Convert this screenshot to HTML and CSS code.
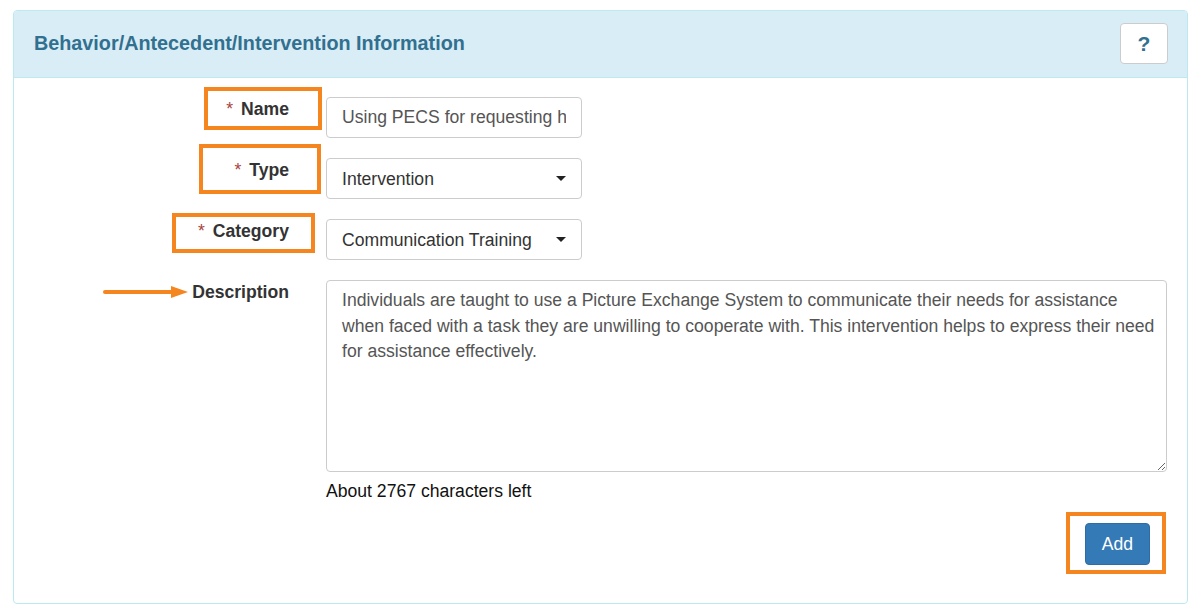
FILE: index.html
```html
<!DOCTYPE html>
<html lang="en">
<head>
  <meta charset="UTF-8">
  <title>Behavior/Antecedent/Intervention Information</title>
  <link rel="stylesheet" href="styles.css">
</head>
<body>
  <div class="panel">
    <div class="panel-heading">
      <h3 class="panel-title">Behavior/Antecedent/Intervention Information</h3>
      <button class="btn-help" type="button">?</button>
    </div>

    <div class="panel-body">
      <!-- Name -->
      <div class="form-row">
        <label class="field-label" for="bai-name">
          <span class="req">*</span>Name
          <span class="mark mark-name"></span>
        </label>
        <div class="field">
          <input id="bai-name" class="form-control short" type="text" value="Using PECS for requesting help">
        </div>
      </div>

      <!-- Type -->
      <div class="form-row">
        <label class="field-label" for="bai-type">
          <span class="req">*</span>Type
          <span class="mark mark-type"></span>
        </label>
        <div class="field">
          <div class="select-wrap">
            <select id="bai-type" class="form-control">
              <option>Intervention</option>
              <option>Behavior</option>
              <option>Antecedent</option>
            </select>
          </div>
        </div>
      </div>

      <!-- Category -->
      <div class="form-row">
        <label class="field-label" for="bai-category">
          <span class="req">*</span>Category
          <span class="mark mark-category"></span>
        </label>
        <div class="field">
          <div class="select-wrap">
            <select id="bai-category" class="form-control">
              <option>Communication Training</option>
            </select>
          </div>
        </div>
      </div>

      <!-- Description -->
      <div class="form-row">
        <label class="field-label" for="bai-desc">
          Description
          <svg class="arrow" width="86" height="12" viewBox="0 0 86 12">
            <line x1="2" y1="6" x2="70" y2="6" stroke="#f5851f" stroke-width="4" stroke-linecap="round"/>
            <polygon points="68,0 85,6 68,12" fill="#f5851f"/>
          </svg>
        </label>
        <div class="field">
          <textarea id="bai-desc" class="form-control desc">Individuals are taught to use a Picture Exchange System to communicate their needs for assistance when faced with a task they are unwilling to cooperate with. This intervention helps to express their need for assistance effectively.</textarea>
          <p class="help-text">About 2767 characters left</p>
        </div>
      </div>

      <div class="actions">
        <span class="add-wrap">
          <button class="btn-primary" type="button">Add</button>
          <span class="mark mark-add"></span>
        </span>
      </div>
    </div>
  </div>
</body>
</html>
```

FILE: styles.css
```css
:root {
  --info-bg: #d9edf7;
  --info-border: #bce8f1;
  --info-text: #31708f;
  --input-border: #ccc;
  --input-text: #555;
  --mark-color: #f5851f;
  --btn-primary: #337ab7;
}
body {
  margin: 0;
  font-family: "Liberation Sans", Arial, sans-serif;
  font-size: 17.6px;
  color: #333;
  background: #fff;
}
.panel {
  margin: 10px 13px 0 13px;
  border: 1px solid var(--info-border);
  border-radius: 4px;
}
.panel-heading {
  display: flex;
  align-items: center;
  justify-content: space-between;
  padding: 12px 19px 13px 20px;
  background: var(--info-bg);
  border-bottom: 1px solid var(--info-border);
  border-radius: 3px 3px 0 0;
}
.panel-title {
  margin: 0;
  font-size: 19.8px;
  font-weight: bold;
  color: var(--info-text);
}
.btn-help {
  width: 48px;
  height: 41px;
  padding: 0;
  background: #fff;
  border: 1px solid var(--input-border);
  border-radius: 4px;
  font-family: inherit;
  font-size: 21px;
  font-weight: bold;
  color: var(--info-text);
  cursor: pointer;
}
.panel-body {
  padding: 19px 20px 38px 0;
}
.form-row {
  display: grid;
  grid-template-columns: 275px 1fr;
  column-gap: 37px;
  margin-bottom: 20px;
}
.field-label {
  position: relative;
  padding-top: 1px;
  text-align: right;
  font-weight: bold;
  line-height: 22px;
}
.req {
  margin-right: 8px;
  color: #a94442;
  font-weight: normal;
}
.form-control {
  box-sizing: border-box;
  display: block;
  height: 41px;
  padding: 6px 15px;
  border: 1px solid var(--input-border);
  border-radius: 4px;
  font-family: inherit;
  font-size: 17.6px;
  color: var(--input-text);
  background: #fff;
}
.short {
  width: 256px;
}
.select-wrap {
  position: relative;
  width: 256px;
}
.select-wrap select {
  width: 100%;
  appearance: none;
  -webkit-appearance: none;
  color: #333;
}
.select-wrap::after {
  content: "";
  position: absolute;
  right: 16px;
  top: 18px;
  border-left: 5px solid transparent;
  border-right: 5px solid transparent;
  border-top: 5px solid #222;
  pointer-events: none;
}
.desc {
  width: 100%;
  height: 192px;
  padding: 7px 6px 5px 15px;
  line-height: 25.5px;
}
.help-text {
  margin: 7px 0 0 0;
  line-height: 24px;
  color: #111;
}
.actions {
  display: flex;
  justify-content: flex-end;
  margin-top: 1px;
  padding-right: 17px;
}
.add-wrap {
  position: relative;
  display: inline-block;
}
.btn-primary {
  display: block;
  height: 42px;
  padding: 0 16px;
  border: 1px solid #2e6da4;
  border-radius: 4px;
  background: var(--btn-primary);
  color: #fff;
  font-family: inherit;
  font-size: 17.6px;
  cursor: pointer;
}
/* annotation overlays */
.mark {
  position: absolute;
  box-sizing: border-box;
  border: 4px solid var(--mark-color);
  pointer-events: none;
}
.mark-name {
  top: -10px;
  right: -33px;
  width: 118px;
  height: 43px;
}
.mark-type {
  top: -14px;
  right: -32px;
  width: 122px;
  height: 50px;
}
.mark-category {
  top: -6px;
  right: -26px;
  width: 143px;
  height: 40px;
}
.mark-add {
  top: -11px;
  left: -19px;
  width: 100px;
  height: 62px;
}
.arrow {
  position: absolute;
  top: 6px;
  right: 100px;
}
```
